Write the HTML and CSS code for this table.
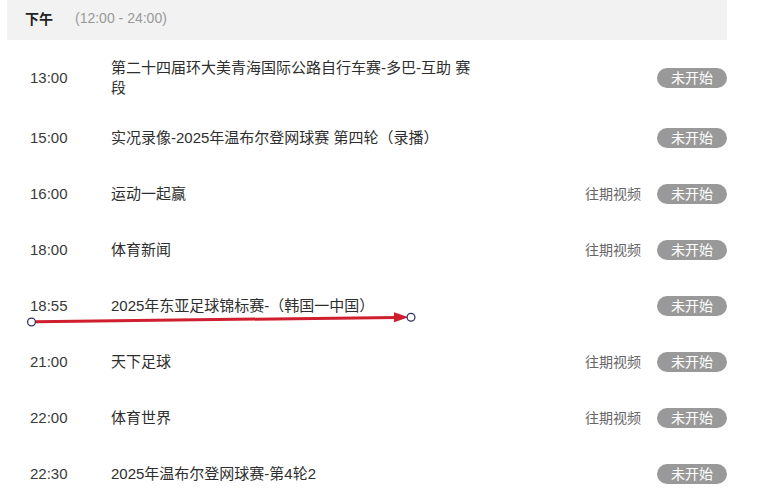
FILE: index.html
```html
<!DOCTYPE html>
<html lang="zh-CN">
<head>
<meta charset="utf-8">
<title>节目单</title>
<link rel="stylesheet" href="styles.css">
</head>
<body>
<div class="schedule">
  <div class="period">
    <span class="period-name">下午</span>
    <span class="period-range">(12:00 - 24:00)</span>
  </div>
  <ul class="list">
    <li class="row">
      <span class="time">13:00</span>
      <span class="title">第二十四届环大美青海国际公路自行车赛-多巴-互助 赛段</span>
      <span class="replay"></span>
      <span class="badge">未开始</span>
    </li>
    <li class="row">
      <span class="time">15:00</span>
      <span class="title">实况录像-2025年温布尔登网球赛 第四轮（录播）</span>
      <span class="replay"></span>
      <span class="badge">未开始</span>
    </li>
    <li class="row">
      <span class="time">16:00</span>
      <span class="title">运动一起赢</span>
      <span class="replay">往期视频</span>
      <span class="badge">未开始</span>
    </li>
    <li class="row">
      <span class="time">18:00</span>
      <span class="title">体育新闻</span>
      <span class="replay">往期视频</span>
      <span class="badge">未开始</span>
    </li>
    <li class="row">
      <span class="time">18:55</span>
      <span class="title">2025年东亚足球锦标赛-（韩国一中国）</span>
      <span class="replay"></span>
      <span class="badge">未开始</span>
    </li>
    <li class="row">
      <span class="time">21:00</span>
      <span class="title">天下足球</span>
      <span class="replay">往期视频</span>
      <span class="badge">未开始</span>
    </li>
    <li class="row">
      <span class="time">22:00</span>
      <span class="title">体育世界</span>
      <span class="replay">往期视频</span>
      <span class="badge">未开始</span>
    </li>
    <li class="row">
      <span class="time">22:30</span>
      <span class="title">2025年温布尔登网球赛-第4轮2</span>
      <span class="replay"></span>
      <span class="badge">未开始</span>
    </li>
  </ul>
  <svg class="annotation" width="761" height="494" viewBox="0 0 761 494" aria-hidden="true">
    <line x1="35" y1="321.8" x2="397" y2="317.4" stroke="#cf1e2e" stroke-width="3" stroke-linecap="round"/>
    <polygon points="394,312.2 408.5,317.2 394,322.2" fill="#cf1e2e"/>
    <circle cx="31.5" cy="322" r="3.9" fill="#fff" stroke="#2f3566" stroke-width="1.3"/>
    <circle cx="411" cy="317.2" r="3.9" fill="#fff" stroke="#2f3566" stroke-width="1.3"/>
  </svg>
</div>
</body>
</html>
```

FILE: styles.css
```css
* {
  box-sizing: border-box;
}

html, body {
  margin: 0;
  padding: 0;
  background: #fff;
}

body {
  font-family: "Liberation Sans", "Noto Sans CJK SC", sans-serif;
  color: #333;
}

.schedule {
  width: 720px;
  margin-left: 7px;
}

.period {
  height: 40px;
  background: #f2f2f2;
  display: flex;
  align-items: center;
  padding: 0 0 4px 18px;
  font-size: 14px;
}

.period-name {
  font-weight: bold;
  color: #222;
  width: 50px;
}

.period-range {
  color: #999;
}

.list {
  list-style: none;
  margin: 6px 0 0;
  padding: 0;
}

.row {
  display: flex;
  align-items: center;
  min-height: 56px;
  padding: 12px 0 12px 23px;
}

.time {
  width: 81px;
  flex: 0 0 81px;
  font-size: 15px;
  color: #3a3a3a;
  line-height: 20px;
}

.title {
  flex: 0 1 370px;
  max-width: 370px;
  font-size: 15px;
  line-height: 20px;
  color: #2e2e2e;
}

.replay {
  margin-left: auto;
  font-size: 14px;
  color: #666;
  line-height: 20px;
}

.badge {
  margin-left: 16px;
  width: 70px;
  height: 20px;
  border-radius: 10px;
  background: #999;
  color: #fff;
  font-size: 14px;
  line-height: 20px;
  text-align: center;
}

.annotation {
  position: absolute;
  left: 0;
  top: 0;
  pointer-events: none;
}
```
